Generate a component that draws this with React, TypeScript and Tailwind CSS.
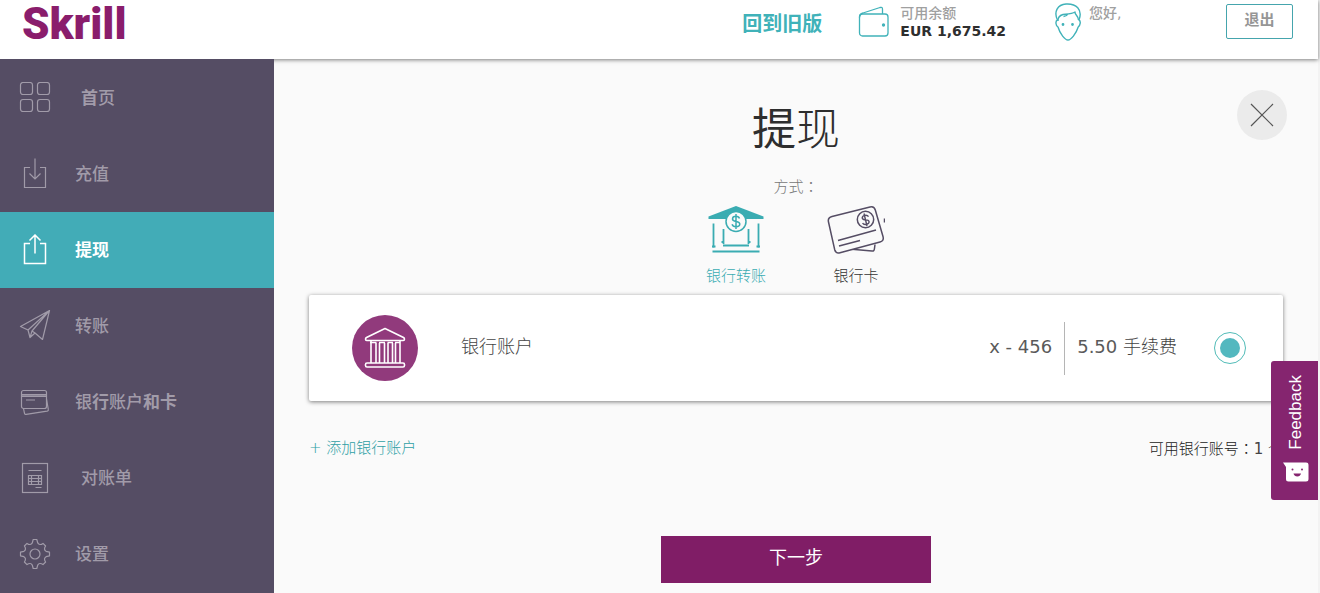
import React, { useState } from 'react';
import clsx from 'clsx';

interface IconProps {
  className?: string;
}

interface LabelRun {
  text: string;
  strong?: boolean;
}

interface NavItem {
  id: string;
  label: LabelRun[];
  icon: React.FC<IconProps>;
  indent?: boolean;
}

const line = {
  viewBox: '0 0 32 32',
  fill: 'none',
  stroke: 'currentColor',
  strokeWidth: 1.2,
  'aria-hidden': true
} as const;

const HomeIcon: React.FC<IconProps> = ({ className }) => (
  <svg {...line} className={className}>
    <rect x="1.5" y="0.5" width="12" height="12" rx="2.5" />
    <rect x="18.5" y="0.5" width="12" height="12" rx="2.5" />
    <rect x="1.5" y="17.5" width="12" height="12" rx="2.5" />
    <rect x="18.5" y="17.5" width="12" height="12" rx="2.5" />
  </svg>
);

const DepositIcon: React.FC<IconProps> = ({ className }) => (
  <svg {...line} className={className}>
    <path d="M11 9.5H5.5v20h21v-20H21M16 .5v20.5M10.5 15.5l5.5 5.5 5.5-5.5" />
  </svg>
);

const WithdrawIcon: React.FC<IconProps> = ({ className }) => (
  <svg {...line} strokeWidth={1.5} className={className}>
    <path d="M11 9.5H5.5v20h21v-20H21M16 19.5V1M10.5 6.5 16 1l5.5 5.5" />
  </svg>
);

const SendIcon: React.FC<IconProps> = ({ className }) => (
  <svg {...line} strokeLinejoin="round" className={className}>
    <path d="M30.5 .5 1.5 16.500l7.500 3.500L30.500 .5l-7 29-7.500-6.500-5 4.500-2-7.500M30.500 .5 13 21l-2 6.500M13 21l3 2" />
  </svg>
);

const CardsIcon: React.FC<IconProps> = ({ className }) => (
  <svg {...line} strokeLinejoin="round" className={className}>
    <rect x="2.5" y="4.5" width="25" height="18" rx="2" />
    <path d="M3 8.5h24M3 10.5h24M7 14h9M4.5 22.5l1 4.8c.2.9.8 1.2 1.7 1l20.800-3.200c1-.2 1.500-.7 1.300-1.700L27.500 13" />
    <path d="M3 9.5h24" strokeWidth="2" opacity=".7" />
  </svg>
);

const StatementIcon: React.FC<IconProps> = ({ className }) => (
  <svg {...line} className={className}>
    <rect x="3.5" y="1.5" width="25" height="29" />
    <path d="M9.5 8.5h13M9.5 13.5h13v9h-13zM9.5 16.5h13M9.5 19.5h13M12.5 13.5v9M19.5 13.5v9M16.5 25.5h6" />
  </svg>
);

const GearIcon: React.FC<IconProps> = ({ className }) => (
  <svg {...line} strokeLinejoin="round" className={className}>
    <circle cx="16" cy="16" r="5" />
    <path d="M14.2 1.5h3.6l.9 3.4Q20.5 7.8 24 5.4l2.6 2.6Q24.2 11.5 27.1 13.3l3.4.9v3.6l-3.4.9Q24.2 20.5 26.6 24l-2.6 2.6Q20.5 24.2 18.7 27.1l-.9 3.4h-3.6l-.9-3.4Q11.5 24.2 8 26.6l-2.6-2.6Q7.8 20.5 4.9 18.7l-3.4-.9v-3.6l3.4-.9Q7.8 11.5 5.4 8l2.6-2.6Q11.5 7.8 13.3 4.9z" />
  </svg>
);

const WalletIcon: React.FC<IconProps> = ({ className }) => (
  <svg viewBox="0 0 32 32" fill="none" stroke="currentColor" strokeWidth="1.3" aria-hidden className={className}>
    <rect x="1.5" y="8" width="28.5" height="22" rx="3" />
    <path d="M1.5 11.5c0-2.5 1-3.8 3.5-4.5L22 1.5c1.8-.5 2.5 0 2.5 1.8V8" strokeLinejoin="round" />
    <circle cx="25.5" cy="19" r="1" fill="currentColor" />
  </svg>
);

const FaceIcon: React.FC<IconProps> = ({ className }) => (
  <svg viewBox="0 0 28 38" fill="none" stroke="currentColor" strokeWidth="1.4" strokeLinejoin="round" aria-hidden className={className}>
    <path d="M3.5 17C-.5 9 3.5 1.5 12 1c10-.7 17 5.500 13 16 2 1 1.500 5-.8 7C22 31 17 37 14 37S6 31 4 24c-2.500-1.500-2.800-6-.5-7z" />
    <path d="M4 18c-.3-3.5 1.5-5.5 5-6.5 5-.5 9-.5 12-2.5-.3 3 3 3 3.5 8M9.500 13.500c2 0 3.500-.8 4.500-2.500" />
    <circle cx="9" cy="21.5" r=".7" fill="currentColor" />
    <circle cx="18.5" cy="21.5" r=".7" fill="currentColor" />
  </svg>
);

const BankTransferIcon: React.FC<IconProps> = ({ className }) => (
  <svg viewBox="0 0 56 50" fill="none" stroke="currentColor" strokeWidth="2" aria-hidden className={className}>
    <path d="M28 1 .5 11.5v2.500h55v-2.500z" fill="currentColor" stroke="none" />
    <path d="M5.5 18.5v24M50.5 18.5v24M15.5 24v15M40.5 24v15M15 40.5h26M4.5 46.5h47" strokeWidth="1.8" />
    <path d="M4 41.500h3.500M48.500 41.500H52M14.500 36v2M41.500 36v2" />
    <circle cx="28" cy="16.5" r="10" fill="#fafafa" strokeWidth="1.5" />
    <path d="M31.5 13.5c-.5-1.500-1.700-2.200-3.500-2.200-2 0-3.500 1-3.500 2.600 0 3.700 7.300 1.500 7.300 5.200 0 1.700-1.600 2.700-3.800 2.700-2 0-3.500-.9-3.900-2.500M28 9v15" strokeWidth="1.5" />
  </svg>
);

const BankCardIcon: React.FC<IconProps> = ({ className }) => (
  <svg viewBox="0 0 58 50" fill="none" stroke="currentColor" strokeWidth="1.5" strokeLinejoin="round" aria-hidden className={className}>
    <path d="M22 44 45 46c1.5.2 2.2-.5 2.400-2l.6-4.500" />
    <path d="M5 11.5 43 2c3-.8 4.5.2 5.3 3L56 31.5c.8 3-.2 4.700-3 5.400L13 47.700c-3 .8-4.500-.4-5.300-3L1.500 17c-.7-3 .5-4.700 3.500-5.500z" fill="#fafafa" />
    <path d="M11 35.5 49 25M12 41l21-5.500" />
    <circle cx="38.5" cy="14.5" r="8.2" />
    <path d="M41.5 11.7c-.8-1.300-2-1.700-3.700-1.300-1.800.5-2.800 1.600-2.500 2.900.8 2.900 6 .2 6.700 3 .4 1.500-.7 2.500-2.600 3-1.700.4-3.100 0-3.800-1.300M37 8.500l3 12.500" strokeWidth="1.4" />
    <path d="M57.5 13.5v4" />
  </svg>
);

const BankIcon: React.FC<IconProps> = ({ className }) => (
  <svg viewBox="0 0 42 42" fill="none" stroke="currentColor" strokeWidth="1.6" strokeLinejoin="round" aria-hidden className={className}>
    <path d="M21 1.5 2.5 10.5c-1.500.8-1.200 3 .5 3h36c1.700 0 2-2.200.5-3z" />
    <path d="M7 14v22M12 16v20M15.5 16v20M20.5 16v20M24 16v20M28.5 16v20M31.5 16v20M36 14v22M6 15.5h6.500M15 15.5h6M23.500 15.5h5.500M31 15.5h5.500" />
    <rect x="1.5" y="36" width="39" height="4" rx="1.5" />
  </svg>
);

const SmileIcon: React.FC<IconProps> = ({ className }) => (
  <svg viewBox="0 0 28 22" aria-hidden className={className}>
    <path d="M1 1.5h23c1.7 0 2.5.8 2.5 2.5v14c0 1.7-.8 2.5-2.500 2.500H6.500C4.800 20.500 4 19.700 4 18V6z" fill="#fff" />
    <circle cx="10.5" cy="8.5" r="1" fill="#85256f" />
    <circle cx="20" cy="8.5" r="1" fill="#85256f" />
    <path d="M11.5 12.5h7.5c-.5 2-1.800 3-3.700 3s-3.300-1-3.800-3z" fill="#85256f" />
  </svg>
);

const NAV_ITEMS: NavItem[] = [
  { id: 'home', label: [{ text: '首', strong: true }, { text: '页' }], icon: HomeIcon, indent: true },
  { id: 'deposit', label: [{ text: '充值' }], icon: DepositIcon },
  { id: 'withdraw', label: [{ text: '提现', strong: true }], icon: WithdrawIcon },
  { id: 'transfer', label: [{ text: '转账' }], icon: SendIcon },
  {
    id: 'accounts',
    label: [{ text: '银' }, { text: '行', strong: true }, { text: '账户' }, { text: '和卡', strong: true }],
    icon: CardsIcon
  },
  { id: 'statement', label: [{ text: '对账单' }], icon: StatementIcon, indent: true },
  { id: 'settings', label: [{ text: '设置' }], icon: GearIcon }
];

// 居中的全角冒号
const Colon: React.FC = () => <span className="font-['Noto_Sans_CJK_TC',sans-serif]">：</span>;

const Header: React.FC = () => (
  <header className="relative z-10 flex h-[59px] items-center bg-white pr-[25px] pb-4 pl-[22px] shadow-[0_1px_4px_rgba(0,0,0,0.5)]">
    <a href="#home" className="pt-1 font-['Roboto',sans-serif] text-[44px] leading-10 font-black text-[#8a1d6c]">
      Skrill
    </a>
    <a href="#classic" className="mr-9 ml-auto pt-1 text-[20px] leading-6 font-bold text-[#40b2b9]">
      回到旧版
    </a>
    <div className="mr-12 flex items-center gap-[10px]">
      <WalletIcon className="h-8 w-8 text-[#40b2b9]" />
      <div>
        <p className="text-[14px] leading-[18px] font-medium text-[#a0a0a0]">可用余额</p>
        <p className="text-[14px] leading-[18px] font-bold text-[#2e2e2e]">EUR 1,675.42</p>
      </div>
    </div>
    <div className="flex w-[172px] items-start gap-[7px]">
      <FaceIcon className="h-[38px] w-7 text-[#40b2b9]" />
      <p className="text-[14px] leading-5 font-medium text-[#a0a0a0]">您好,</p>
    </div>
    <button type="button" className="h-[35px] w-[67px] rounded-[2px] border border-[#45a5ad] pb-1 text-[15px] leading-5 font-bold text-[#969696]">
      退出
    </button>
  </header>
);

interface SidebarProps {
  active: string;
  onSelect: (id: string) => void;
}

const Sidebar: React.FC<SidebarProps> = ({ active, onSelect }) => (
  <nav className="relative z-20 w-[274px] shrink-0 bg-[#554d64] pt-px">
    {NAV_ITEMS.map(({ id, label, icon: Icon, indent }) => (
      <a
        key={id}
        href={`#${id}`}
        onClick={() => onSelect(id)}
        className={clsx(
          'flex h-[76px] items-center pl-[19px] text-[17px] leading-6',
          active === id ? 'bg-[#42acb7] text-white' : 'text-[#a19ba9]'
        )}
      >
        <Icon className="h-8 w-8 shrink-0" />
        <span className={indent ? 'ml-[30px]' : 'ml-6'}>
          {label.map((run) => (
            <span key={run.text} className={run.strong ? 'font-bold' : 'font-medium'}>
              {run.text}
            </span>
          ))}
        </span>
      </a>
    ))}
  </nav>
);

export default function App() {
  const [section, setSection] = useState('withdraw');
  const [method, setMethod] = useState('bank');

  return (
    <div className="flex min-h-screen flex-col border-r-2 border-[#f3f3f3] bg-[#fafafa] font-['DejaVu_Sans','Noto_Sans_CJK_SC',sans-serif]">
      <Header />
      <div className="flex flex-1">
        <Sidebar active={section} onSelect={setSection} />

        <main className="flex min-w-0 flex-1 flex-col px-[35px] pt-[31px] pb-[10px]">
          <div className="grid grid-cols-[50px_1fr_50px] items-start">
            <h1 className="col-start-2 mt-[14px] text-center text-[44px] leading-[52px] text-[#2e2e2e]">
              <span className="font-normal">提</span>
              <span className="font-light">现</span>
            </h1>
            <button type="button" aria-label="关闭" className="ml-1 flex h-[50px] w-[50px] items-center justify-center rounded-full bg-[#ebebeb]">
              <svg viewBox="0 0 24 24" stroke="#555" strokeWidth="1.2" aria-hidden className="h-6 w-6">
                <path d="M1 1l22 22M23 1 1 23" />
              </svg>
            </button>
          </div>

          <p className="mt-5 h-5 text-center text-[15px] leading-5 font-light text-[#777]">
            方式
            <Colon />
          </p>

          {/* 提现方式 */}
          <div className="mt-[9px] flex justify-center text-[15px] leading-5">
            <button
              type="button"
              aria-pressed={method === 'bank'}
              onClick={() => setMethod('bank')}
              className="flex w-[120px] flex-col items-center gap-[11px] font-light text-[#3aacb2]"
            >
              <BankTransferIcon className="h-[50px] w-14" />
              银行转账
            </button>
            <button
              type="button"
              aria-pressed={method === 'card'}
              onClick={() => setMethod('card')}
              className="flex w-[120px] flex-col items-center gap-[11px] font-light text-[#554d64]"
            >
              <BankCardIcon className="h-[50px] w-[58px]" />
              <span className="text-[#333]">银行卡</span>
            </button>
          </div>

          {/* 银行账户 */}
          <label
            htmlFor="account"
            className="mt-[9px] flex h-[106px] items-center rounded-[2px] bg-white pr-[37px] pl-[43px] text-[18px] leading-6 font-light text-[#444] shadow-[0_1px_4px_rgba(0,0,0,0.5)]"
          >
            <span className="flex h-[66px] w-[66px] items-center justify-center rounded-full bg-[#913a7c] text-white">
              <BankIcon className="h-[42px] w-[42px]" />
            </span>
            <span className="ml-[43px] pb-0.5">银行账户</span>
            <span className="ml-auto pr-3 pb-0.5 font-normal text-[#5a5a5a]">x - 456</span>
            <span className="flex h-[53px] items-center border-l border-[#b5b5b5] pb-0.5 pl-3">
              <span>
                <span className="font-normal text-[#5a5a5a]">5.50</span> 手续费
              </span>
            </span>
            <input
              id="account"
              type="radio"
              name="account"
              defaultChecked
              className="ml-[37px] h-8 w-8 appearance-none rounded-full border border-[#52bcb8] bg-white bg-clip-content p-[5px] checked:bg-[#53b8bf]"
            />
          </label>

          <div className="mt-[37px] flex h-5 justify-between text-[15px] leading-5 font-light">
            <a href="#add-account" className="text-[#2f9fa5]">
              + 添加银行账户
            </a>
            <p className="text-[#222]">
              可用银行账号
              <Colon />
              <span className="font-normal text-[#444]">1</span> 个
            </p>
          </div>

          <button type="button" className="mt-[78px] h-[47px] w-[270px] self-center bg-[#801d66] pb-1 text-[18px] leading-6 text-white">
            下一步
          </button>
        </main>
      </div>

      <button
        type="button"
        className="fixed top-[361px] right-[2px] z-30 flex h-[139px] w-[47px] flex-col items-center justify-between rounded-l-[3px] bg-[#85256f] pt-[14px] pb-[17px] pl-0.5 text-white"
      >
        <span className="rotate-180 font-['Liberation_Sans',sans-serif] text-[17px] leading-5 [writing-mode:vertical-rl]">Feedback</span>
        <SmileIcon className="h-[22px] w-7" />
      </button>
    </div>
  );
}
